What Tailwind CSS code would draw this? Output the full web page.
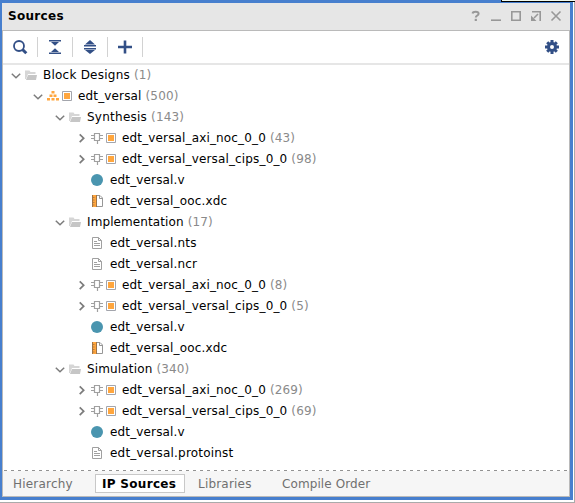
<!DOCTYPE html>
<html lang="en">
<head>
<meta charset="utf-8">
<title>Sources</title>
<script src="https://cdn.jsdelivr.net/npm/@tailwindcss/browser@4"></script>
</head>
<body class="relative w-[575px] h-[503px] overflow-hidden bg-white font-['DejaVu_Sans',sans-serif] text-[12px] text-black">
<svg class="hidden">
  <symbol id="down" viewBox="0 0 14 15"><path d="M2.800 5.800 L7 9.800 L11.200 5.800" fill="none" stroke="#7c7c7c" stroke-width="1.500"/></symbol>
  <symbol id="right" viewBox="0 0 14 15"><path d="M4.700 3.300 L8.700 7.200 L4.700 11.100" fill="none" stroke="#7c7c7c" stroke-width="1.700"/></symbol>
  <symbol id="folder" viewBox="0 0 13 15"><path d="M0 2.500h4.500l1 1.500h5v2H3L1 11H0z" fill="#d6d6d6"/><path d="M3 7h9l-1 5H1z" fill="#c6c6c6"/></symbol>
  <symbol id="tree" viewBox="0 0 13 15"><path d="M4.500 2h3v2.500h-3zM2.500 5.500h3V8h-3zM6.500 5.500h3V8h-3zM0 9h3v2.500H0zM4.500 9h3v2.500h-3zM9 9h3v2.500H9z" fill="#ffa63e"/></symbol>
  <symbol id="box" viewBox="0 0 12 15"><path d="M.5 2.500h9v9h-9z" fill="#fff" stroke="#a3a5ac"/><path d="M2 4h6v6H2z" fill="#ffa63e"/></symbol>
  <symbol id="chip" viewBox="0 0 13 15"><path d="M3.500 2.500h5v7h-5zM0 4.500h3M0 7.500h3M9 4.500h3M9 7.500h3M6.500 9.500V13" fill="none" stroke="#a0a0a0" stroke-width="1.200"/></symbol>
  <symbol id="dot" viewBox="0 0 13 15"><circle cx="6" cy="7" r="6" fill="#4a95af"/></symbol>
  <symbol id="xdc" viewBox="0 0 13 15"><path d="M5.500 1.500h3.500l2.500 2.500v8.500h-6" fill="#fff" stroke="#979797"/><path d="M8.500 1.500v3h3" fill="none" stroke="#979797"/><path d="M1 1h4v12H1z" fill="#ffa63e"/><path d="M1.500 1v12M5.500 1v12" stroke="#a07446"/><path d="M2 3.500h1.500M2 6h1.500M2 8.500h1.500M2 11h1.500" stroke="#a07446" stroke-width=".8"/></symbol>
  <symbol id="doc" viewBox="0 0 13 15"><path d="M1.500 1.500h6l3 3v8h-9z" fill="#fff" stroke="#a0a0a0"/><path d="M7.500 1.500v3h3M3 5.500h3M3 7.500h6M3 9.500h6" fill="none" stroke="#a0a0a0"/></symbol>
</svg>

<main class="w-[573px] h-[500px] flex flex-col bg-[#477fce] pt-[3px] pl-[2px] pr-[3px] pb-[3px]">
  <header class="h-[27px] shrink-0 bg-[#e6e6e6] flex items-center justify-between pl-[6px] pr-[8px]">
    <h1 class="font-bold leading-[15px] tracking-[0.3px]">Sources</h1>
    <svg class="w-[92px] h-[15px]" viewBox="0 0 92 15" fill="none" stroke="#989898" stroke-width="1.600">
      <path d="M2.500 4.500Q3 2.800 5.600 2.800Q8.600 2.800 8.600 4.800Q8.600 5.900 7.100 6.600Q5.800 7.200 5.800 8.500" stroke-width="2"/><path d="M4.700 9.800h2.200V12H4.700z" fill="#989898" stroke="none"/>
      <path d="M21 11.200h10"/>
      <path d="M41.800 2.800h8.400v8.400h-8.400z"/>
      <path d="M62 2.800h8.200V12"/><path d="M68 5l-4 4"/><path d="M61 6.500v5.500h5.500z" fill="#989898" stroke="none"/>
      <path d="M81.500 2.500l9 9M90.500 2.500l-9 9"/>
    </svg>
  </header>

  <div class="flex-1 min-h-0 flex flex-col bg-white border border-[#bababa]">
    <div class="h-[32px] shrink-0 flex items-center justify-between pl-[9px] pr-[10px]">
      <div class="flex items-center">
        <svg class="w-[16px] h-[16px]" viewBox="0 0 16 16" fill="none" stroke="#324f86"><circle cx="7" cy="7" r="5" stroke-width="1.800"/><path d="M10.500 10.500L14.300 14.300" stroke-width="3"/></svg>
        <i class="w-px h-[20px] bg-[#d2d2d2] ml-[9px]"></i>
        <svg class="w-[14px] h-[16px] ml-[10px]" viewBox="0 0 14 16" fill="#324f86"><path d="M1 1h12v1.500H1zM3 3h8L7 6.700zM1 13.500h12V15H1zM3 13h8L7 9.300z"/></svg>
        <i class="w-px h-[20px] bg-[#d2d2d2] ml-[10px]"></i>
        <svg class="w-[14px] h-[16px] ml-[10px]" viewBox="0 0 14 16" fill="#324f86"><path d="M7 1l5 4.500H2zM1 6h12v1.500H1zM1 9h12v1.500H1zM2 11h10l-5 4z"/></svg>
        <i class="w-px h-[20px] bg-[#d2d2d2] ml-[10px]"></i>
        <svg class="w-[14px] h-[16px] ml-[10px]" viewBox="0 0 14 16" fill="#324f86"><path d="M5.700 1.500h2.600v5.200H14v2.600H8.300v5.200H5.700V9.300H0V6.700h5.700z"/></svg>
        <i class="w-px h-[20px] bg-[#d2d2d2] ml-[10px]"></i>
      </div>
      <svg class="w-[14px] h-[14px]" viewBox="0 0 14 14"><g stroke="#324f86" stroke-width="3"><path d="M7 0v14M0 7h14M2.200 2.200l9.600 9.600M11.800 2.200l-9.600 9.600"/></g><circle cx="7" cy="7" r="3.500" fill="#fff" stroke="#324f86" stroke-width="3"/></svg>
    </div>
    <div class="h-[2px] shrink-0 bg-[#e6e6e6]"></div>
    <ul id="rows" class="flex-1 min-h-0"></ul>
    <div class="h-px shrink-0 ml-px bg-[repeating-linear-gradient(90deg,#929292_0px,#929292_3px,#fff_3px,#fff_7px)]"></div>
    <nav class="h-[25px] shrink-0 bg-[#f6f6f6] flex items-center text-[#707070] leading-[15px]">
      <span class="w-[92px] pl-[10px] pt-[2px] tracking-[0.2px]">Hierarchy</span>
      <span class="w-[90px] h-[19px] bg-white border border-[#c8c8c8] pl-[6px] leading-[19px] font-bold text-black tracking-[0.3px] whitespace-nowrap">IP Sources</span>
      <span class="ml-[13px] w-[84px] pt-[2px] tracking-[0.2px]">Libraries</span>
      <span class="pt-[2px] tracking-[0.1px]">Compile Order</span>
    </nav>
  </div>
</main>
<div class="absolute left-0 top-[502px] w-[575px] h-px bg-[#aaa]"></div>
<div class="absolute left-[574px] top-0 w-px h-[503px] bg-[#aaa]"></div>
<div class="absolute left-[501px] top-0 w-[74px] h-[2px] bg-[#f1faee] border-l border-b border-black"></div>

<script>
const rows = [
  [0, 'down', ['folder'], 'Block Designs', 1],
  [1, 'down', ['tree', 'box'], 'edt_versal', 500],
  [2, 'down', ['folder'], 'Synthesis', 143],
  [3, 'right', ['chip', 'box'], 'edt_versal_axi_noc_0_0', 43],
  [3, 'right', ['chip', 'box'], 'edt_versal_versal_cips_0_0', 98],
  [3, '', ['dot'], 'edt_versal.v'],
  [3, '', ['xdc'], 'edt_versal_ooc.xdc'],
  [2, 'down', ['folder'], 'Implementation', 17],
  [3, '', ['doc'], 'edt_versal.nts'],
  [3, '', ['doc'], 'edt_versal.ncr'],
  [3, 'right', ['chip', 'box'], 'edt_versal_axi_noc_0_0', 8],
  [3, 'right', ['chip', 'box'], 'edt_versal_versal_cips_0_0', 5],
  [3, '', ['dot'], 'edt_versal.v'],
  [3, '', ['xdc'], 'edt_versal_ooc.xdc'],
  [2, 'down', ['folder'], 'Simulation', 340],
  [3, 'right', ['chip', 'box'], 'edt_versal_axi_noc_0_0', 269],
  [3, 'right', ['chip', 'box'], 'edt_versal_versal_cips_0_0', 69],
  [3, '', ['dot'], 'edt_versal.v'],
  [3, '', ['doc'], 'edt_versal.protoinst'],
];
const tracking = {
  'Block Designs': 'tracking-[0.23px]',
  'Synthesis': 'tracking-[0.25px]',
  'Implementation': 'tracking-[0.1px]',
  'edt_versal.protoinst': 'tracking-[0.2px]',
};
document.getElementById('rows').innerHTML = rows.map(([level, arrow, icons, name, count]) => `
  <li class="h-[21px] flex items-center leading-[15px] whitespace-pre" style="padding-left:${6 + level * 22}px">
    <span class="w-[14px] h-[15px] mr-[2px]">${arrow ? `<svg class="w-[14px] h-[15px]"><use href="#${arrow}"/></svg>` : ''}</span>
    ${icons.map(n => n === 'box'
      ? '<svg class="w-[12px] h-[15px] ml-[2px]"><use href="#box"/></svg>'
      : `<svg class="w-[13px] h-[15px]"><use href="#${n}"/></svg>`).join('')}
    <span class="${icons.length > 1 ? 'ml-[4px]' : arrow ? 'ml-[5px]' : 'ml-[6px]'} ${tracking[name] || 'tracking-[0.15px]'}">${name}</span>${count ? `<span class="text-[#8a8a8a] tracking-[0.15px]"> (${count})</span>` : ''}
  </li>`).join('');
</script>
</body>
</html>
